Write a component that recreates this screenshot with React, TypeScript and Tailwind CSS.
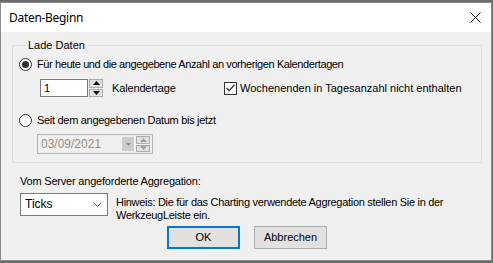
import React from "react";

function Radio({ checked }: { checked?: boolean }) {
  return (
    <span className="flex h-[13px] w-[13px] shrink-0 items-center justify-center rounded-full border border-[#333333] bg-white">
      {checked && <span className="h-[7px] w-[7px] rounded-full bg-[#333333]" />}
    </span>
  );
}

function SpinArrows({ disabled }: { disabled?: boolean }) {
  const fill = disabled ? "#a0a0a0" : "#000000";
  return (
    <div className="flex h-full w-[14px] flex-col gap-[1px]">
      <div className="flex flex-1 items-center justify-center border border-[#adadad] bg-[#e1e1e1]">
        <svg width="7" height="4" viewBox="0 0 7 4">
          <path d="M0 4 L3.5 0 L7 4 Z" fill={fill} />
        </svg>
      </div>
      <div className="flex flex-1 items-center justify-center border border-[#adadad] bg-[#e1e1e1]">
        <svg width="7" height="4" viewBox="0 0 7 4">
          <path d="M0 0 L3.5 4 L7 0 Z" fill={fill} />
        </svg>
      </div>
    </div>
  );
}

export default function App() {
  return (
    <div className="h-[263px] w-[493px] overflow-hidden bg-[#6b6b6b] pt-[2px]">
      <div className="flex h-[259px] w-[492px] flex-col border border-[#8c8c8c] bg-[#f0f0f0]">
        {/* title bar */}
        <div className="flex h-[29px] shrink-0 items-center justify-between bg-white pl-[8px] pr-[10px]">
          <span className="font-['Noto_Sans',sans-serif] text-[12px] tracking-[-0.3px] text-black">Daten-Beginn</span>
          <svg width="11" height="11" viewBox="0 0 11 11">
            <path d="M0.5 0.5 L10.5 10.5 M10.5 0.5 L0.5 10.5" stroke="#000" strokeWidth="1" />
          </svg>
        </div>

        <div className="flex flex-1 flex-col pl-[11px] pt-[7px] font-['Liberation_Sans',Arial,sans-serif] text-[11px] leading-[13px] text-black">
          <fieldset className="h-[124px] w-[470px] border border-[#dcdcdc] pl-[6px]">
            <legend className="ml-[7px] px-[2px] leading-[13px]">Lade Daten</legend>

            <div className="mt-[6px] flex h-[13px] items-center gap-[5px]">
              <Radio checked />
              <span className="tracking-[-0.4px]">Für heute und die angegebene Anzahl an vorherigen Kalendertagen</span>
            </div>

            <div className="mt-[8px] flex h-[18px] items-center">
              <div className="ml-[21px] flex h-full w-[48px] items-center border border-[#7a7a7a] bg-white pl-[3px]">
                1
              </div>
              <div className="ml-[1px] h-full">
                <SpinArrows />
              </div>
              <span className="ml-[9px] w-[67px] tracking-[-0.15px]">Kalendertage</span>
              <span className="ml-[45px] flex h-[13px] w-[13px] items-center justify-center border border-[#333333] bg-white">
                <svg width="9" height="8" viewBox="0 0 9 8">
                  <path d="M0.5 4 L3.2 6.7 L8.5 0.8" fill="none" stroke="#333" strokeWidth="1.3" />
                </svg>
              </span>
              <span className="ml-[3px]">Wochenenden in Tagesanzahl nicht enthalten</span>
            </div>

            <div className="mt-[17px] flex h-[13px] items-center gap-[5px]">
              <Radio />
              <span className="tracking-[-0.3px]">Seit dem angegebenen Datum bis jetzt</span>
            </div>

            <div className="ml-[18px] mt-[7px] flex h-[20px] w-[116px] items-center border border-[#b4b4b4] bg-[#f0f0f0] pl-[3px] pr-[2px]">
              <span className="flex-1 text-[12px] text-[#a48a78]">03/09/2021</span>
              <span className="flex h-[14px] w-[12px] items-center justify-center bg-[#cccccc]">
                <svg width="5" height="3" viewBox="0 0 5 3">
                  <path d="M0 0 L2.5 3 L5 0 Z" fill="#8a8a8a" />
                </svg>
              </span>
              <div className="ml-[2px] h-[16px]">
                <SpinArrows disabled />
              </div>
            </div>
          </fieldset>

          <div className="ml-[8px] mt-[12px] tracking-[-0.2px]">Vom Server angeforderte Aggregation:</div>

          <div className="ml-[8px] mt-[5px] flex">
            <div className="flex h-[23px] w-[88px] shrink-0 items-center justify-between border border-[#7a7a7a] bg-white pl-[4px] pr-[5px] text-[12px]">
              <span>Ticks</span>
              <svg width="9" height="5" viewBox="0 0 9 5">
                <path d="M0.5 0.5 L4.5 4.5 L8.5 0.5" fill="none" stroke="#606060" strokeWidth="1" />
              </svg>
            </div>
            <div className="ml-[8px] mt-[3px] tracking-[-0.3px]">
              Hinweis: Die für das Charting verwendete Aggregation stellen Sie in der
              <br />
              WerkzeugLeiste ein.
            </div>
          </div>

          <div className="mt-[4px] flex gap-[14px] pl-[155px]">
            <button className="flex h-[23px] w-[73px] items-center justify-center border-2 border-[#0078d7] bg-[#e1e1e1]">
              OK
            </button>
            <button className="flex h-[23px] w-[73px] items-center justify-center border border-[#adadad] bg-[#e1e1e1]">
              Abbrechen
            </button>
          </div>
        </div>
      </div>
    </div>
  );
}
